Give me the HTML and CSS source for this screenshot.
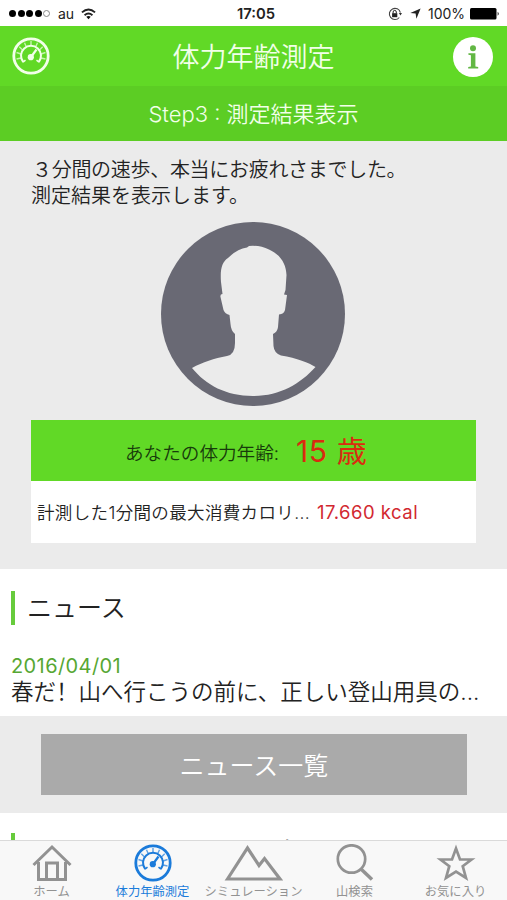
FILE: index.html
```html
<!DOCTYPE html>
<html lang="ja">
<head>
<meta charset="utf-8">
<meta name="viewport" content="width=device-width, initial-scale=1">
<title>体力年齢測定</title>
<link rel="stylesheet" href="styles.css">
</head>
<body>
<svg class="defs" width="0" height="0" aria-hidden="true">
  <symbol id="gauge" viewBox="0 0 38 38">
    <g fill="none" stroke="currentColor">
      <circle cx="19" cy="19" r="17.2" stroke-width="2.8"/>
      <path d="M19 4v5M12.500 5.700l2 4.500M7.300 9.700l3.500 3.500M4.500 15.500l4.500 1.500M4.500 22l4.500-1M25.500 5.700l-2 4.500M30.700 9.700l-3.500 3.500M33.500 15.500l-4.500 1.500M33.500 22l-4.500-1" stroke-width="1.4" opacity=".7"/>
      <path d="M11.200 25A10 10 0 1 1 26.800 25" stroke-width="2"/>
      <path d="M11 25.200l2.500-2M27 25.200l-2.500-2" stroke-width="1.5"/>
      <path d="M19 20l5.500-7.500" stroke-width="2.2"/>
    </g>
    <circle cx="18.8" cy="20.200" r="3.100" fill="currentColor"/>
  </symbol>
</svg>
<div class="phone">
  <header class="status">
    <div class="signal"><i></i><i></i><i></i><i></i><i class="empty"></i></div>
    <span class="carrier">au</span>
    <svg class="wifi" viewBox="0 0 16 12"><g fill="none" stroke="#222" stroke-width="2"><path d="M1 4.3Q8-1.7 15 4.3"/><path d="M3.8 7.3Q8 3.7 12.2 7.3"/></g><path d="M5.6 8.9Q8 7.2 10.4 8.9L8 11.5Z" fill="#111"/></svg>
    <time class="clock">17:05</time>
    <div class="status-right">
      <svg class="lock" viewBox="0 0 14 14"><path d="M11.3 10.5A5.6 5.6 0 1 1 12.4 5.6" fill="none" stroke="#444" stroke-width="1.1"/><path d="M10.8 6h3.2l-1.5 2.4Z" fill="#333"/><rect x="4.1" y="6.2" width="5.2" height="4" fill="#222"/><path d="M5.1 6.4V5a1.6 1.6 0 0 1 3.2 0v1.4" fill="none" stroke="#222"/></svg>
      <svg class="arrow" viewBox="0 0 11 11"><path d="M10.6.4L6.4 10.7 5.6 5.5.3 4.9Z" fill="#222"/></svg>
      <span class="percent">100%</span>
      <svg class="battery" viewBox="0 0 30 12"><rect width="26.5" height="11.5" rx="1.5"/><path d="M27.7 3.8q2 2 0 4Z"/></svg>
    </div>
  </header>
  <nav class="titlebar">
    <svg class="title-gauge"><use href="#gauge"/></svg>
    <h1>体力年齢測定</h1>
    <svg class="info" viewBox="0 0 40 40"><circle cx="20" cy="20" r="20" fill="#fff"/><g fill="#62b744"><circle cx="20" cy="11.3" r="3"/><path d="M15.4 16.3h7v13.2l2.8.5v1.5H15.2V30l2.7-.5V18.3l-2.5-.5Z"/></g></svg>
  </nav>
  <div class="step">Step3 : 測定結果表示</div>
  <main>
    <section class="result">
      <p class="message"><span class="lead">３分間の速歩、本当にお疲れさまでした。</span><span>測定結果を表示します。</span></p>
      <svg class="avatar" viewBox="0 0 184 184"><circle cx="92" cy="92" r="92" fill="#696974"/><path fill="#ebebeb" d="M31 146C42 140 53 136.500 66 134Q74 132.500 74 121V112Q70 109 69.500 102L68.500 93Q64 92 62.500 88L59.500 75Q59 72 61.500 72L60 60C59 47 61 40 67 36Q76 27 86 25.500L88 24Q99 23 108 27.500C120 33 125 42 125.500 53L124.500 68L123 72.500L126 73L124 88Q123 92 118 92.500L117 105Q116.500 110 112 112L112.500 124Q113 131 120 133.500C136 136 148 141 154.500 145C139 162 119 174 92 174C65 174 45 163 31 146Z"/></svg>
      <div class="card">
        <div class="age"><span class="age-label">あなたの体力年齢:</span><strong>15 歳</strong></div>
        <div class="calories"><span class="cal-label">計測した1分間の最大消費カロリ...</span><span class="cal-value">17.660 kcal</span></div>
      </div>
    </section>
    <section class="news">
      <h2>ニュース</h2>
      <time>2016/04/01</time>
      <p>春だ<span class="bang" lang="zh-Hans">！</span>山へ行こうの前に、正しい登山用具の...</p>
    </section>
    <div class="more"><button>ニュース一覧</button></div>
    <section class="next"><h2>あなたにおすすめの百名山</h2></section>
  </main>
  <footer class="tabs">
    <a class="tab"><svg viewBox="0 0 40 38"><path d="M1.500 21L20 3 38.500 21M6.500 18V35.500H33.500V18M14.500 35V19H25.500V35" fill="none" stroke="currentColor" stroke-width="3"/></svg><span>ホーム</span></a>
    <a class="tab active"><svg viewBox="0 0 38 38"><use href="#gauge"/></svg><span>体力年齢測定</span></a>
    <a class="tab"><svg class="wide" viewBox="0 0 60 38"><path d="M3.500 35L23.500 4 35 21.500 40.500 14.500 56 35Z" fill="none" stroke="currentColor" stroke-width="3.200"/></svg><span>シミュレーション</span></a>
    <a class="tab"><svg viewBox="0 0 38 38"><circle cx="15.500" cy="15" r="13.700" fill="none" stroke="currentColor" stroke-width="2.700"/><path d="M25 25L36 35.500" stroke="currentColor" stroke-width="3.500"/></svg><span>山検索</span></a>
    <a class="tab"><svg viewBox="0 0 38 38"><path d="M19 4.500L23 15.500H34.500L25.700 22.200 29 34 19 27.500 9 34 12.300 22.200 3.500 15.500H15Z" fill="none" stroke="currentColor" stroke-width="2.700"/></svg><span>お気に入り</span></a>
  </footer>
</div>
</body>
</html>
```

FILE: styles.css
```css
* { box-sizing: border-box; }
body { margin: 0; background: #fff; color: #222; font-family: Inter, "Noto Sans CJK JP", sans-serif; }
h1, h2, p { margin: 0; font-weight: 400; }
.defs { display: block; }
.phone { width: 507px; height: 900px; display: flex; flex-direction: column; overflow: hidden; white-space: nowrap; }
.status { height: 26px; flex: none; display: grid; grid-template-columns: 49px 23px 30px 1fr 118px; align-items: center; padding: 1px 6px 0 9px; font-size: 14px; }
.signal { display: flex; gap: 1.6px; }
.signal i { width: 7px; height: 7px; border-radius: 50%; background: #000; }
.signal .empty { background: #fff; border: 1px solid #888; }
.wifi { width: 15px; height: 12px; }
.clock { font-weight: 600; font-size: 14.800px; padding-left: 126px; }
.status-right { display: flex; align-items: center; padding-left: 5px; }
.lock { width: 14px; height: 14px; flex: none; }
.arrow { width: 11px; height: 11px; flex: none; margin-left: 8px; }
.percent { margin-left: 7px; width: 38px; }
.battery { width: 30px; height: 12px; flex: none; margin-left: 4px; }
.titlebar { height: 60px; flex: none; background: #61d926; display: grid; grid-template-columns: 60px 1fr 60px; grid-template-rows: 60px; align-items: center; color: #f2ffe9; }
.title-gauge { width: 38px; height: 38px; margin-left: 12px; }
h1 { font-size: 27px; text-align: center; line-height: 56px; font-weight: 350; padding-top: 4px; }
.info { width: 40px; height: 40px; margin: 2px 0 0 6px; }
.step { height: 55px; flex: none; background: #5ccd24; color: #f2ffe9; text-align: center; font-size: 22px; line-height: 56px; font-weight: 350; }
main { flex: 1; min-height: 0; overflow: hidden; }
.result { height: 428px; background: #ebebeb; padding: 16px 31px 0; display: flex; flex-direction: column; align-items: center; }
.message { align-self: stretch; font-size: 20px; line-height: 26px; font-weight: 350; }
.message span { display: block; }
.message .lead { letter-spacing: -.3px; padding-left: 1px; }
.avatar { width: 184px; height: 184px; margin: 13px 1px 0 0; flex: none; }
.card { width: 445px; margin-top: 14px; background: #fff; }
.age { height: 61px; background: #61d926; display: flex; align-items: center; padding-left: 94px; color: #173b0b; }
.age-label { font-size: 18.600px; font-weight: 350; width: 171px; padding-top: 2px; }
.age strong { font-size: 30px; font-weight: 400; color: #da2b10; letter-spacing: .6px; margin-top: -4px; }
.calories { height: 62px; display: flex; align-items: center; padding: 0 0 2px 6px; }
.cal-label { width: 280px; font-size: 17.500px; font-weight: 350; letter-spacing: .35px; }
.cal-value { color: #d22830; font-size: 18.500px; letter-spacing: .5px; margin-top: 2px; }
.news { height: 147px; padding: 22px 11px 0; }
h2 { border-left: 4px solid #67cb3c; padding-left: 12px; height: 34px; line-height: 34px; font-size: 25px; font-weight: 350; }
.news time { display: block; margin-top: 28px; font-size: 20px; line-height: 26px; letter-spacing: .4px; color: #57a733; }
.news p { font-size: 22.500px; line-height: 24px; font-weight: 350; margin-top: -1px; }
.bang { font-family: "Noto Sans CJK SC", sans-serif; }
.more { height: 97px; background: #ebebeb; padding: 18px 40px 0 41px; }
.more button { display: block; width: 426px; height: 61px; border: 0; padding: 0 0 2px; background: #aaa; color: #fff; font: 350 25px Inter, "Noto Sans CJK JP", sans-serif; }
.next { padding: 20px 11px 0; }
.next h2 { line-height: 38px; }
.tabs { height: 60px; flex: none; border-top: 1px solid #dadada; background: #f8f8f8; display: grid; grid-template-columns: repeat(5, 101px); padding-left: 1px; }
.tab { display: flex; flex-direction: column; align-items: center; color: #929292; font-size: 12.300px; line-height: 18px; padding-top: 3px; }
.tab svg { width: 40px; height: 38px; flex: none; }
.tab .wide { width: 60px; }
.tab.active { color: #1b7bda; }
.tab span { margin-top: 1px; }
```
